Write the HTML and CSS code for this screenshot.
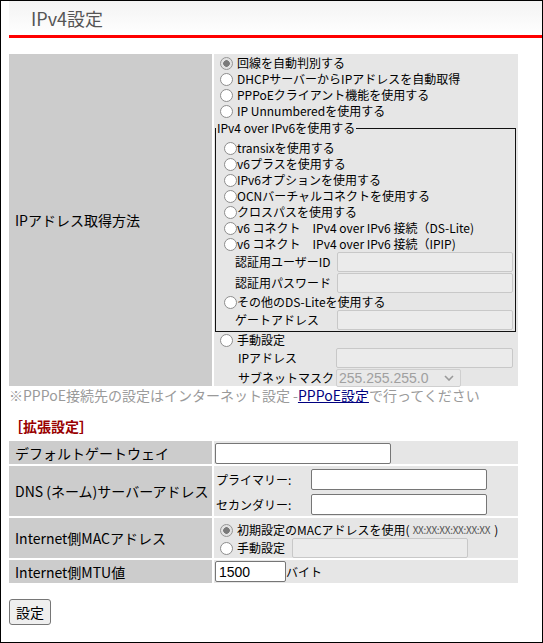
FILE: index.html
```html
<!DOCTYPE html>
<html lang="ja">
<head>
<meta charset="utf-8">
<title>IPv4設定</title>
<link rel="stylesheet" href="styles.css">
</head>
<body>
<div class="frame">
  <div class="header"><h1 class="title">IPv4設定</h1></div>

  <div class="grid main">
    <div class="lab">IPアドレス取得方法</div>
    <div class="val first">
      <label class="opt"><input type="radio" class="radio on" name="m" checked disabled>回線を自動判別する</label>
      <label class="opt"><input type="radio" class="radio" name="m">DHCPサーバーからIPアドレスを自動取得</label>
      <label class="opt"><input type="radio" class="radio" name="m">PPPoEクライアント機能を使用する</label>
      <label class="opt"><input type="radio" class="radio" name="m">IP Unnumberedを使用する</label>
      <fieldset class="v6">
        <legend>IPv4 over IPv6を使用する</legend>
        <div class="v6-body">
          <label class="opt"><input type="radio" class="radio" name="m">transixを使用する</label>
          <label class="opt"><input type="radio" class="radio" name="m">v6プラスを使用する</label>
          <label class="opt"><input type="radio" class="radio" name="m">IPv6オプションを使用する</label>
          <label class="opt"><input type="radio" class="radio" name="m">OCNバーチャルコネクトを使用する</label>
          <label class="opt"><input type="radio" class="radio" name="m">クロスパスを使用する</label>
          <label class="opt"><input type="radio" class="radio" name="m">v6 コネクト　IPv4 over IPv6 接続（DS-Lite)</label>
          <label class="opt"><input type="radio" class="radio" name="m">v6 コネクト　IPv4 over IPv6 接続（IPIP)</label>
          <div class="field"><span class="flabel">認証用ユーザーID</span><input type="text" class="txt" disabled></div>
          <div class="field gap"><span class="flabel">認証用パスワード</span><input type="text" class="txt" disabled></div>
          <label class="opt gap"><input type="radio" class="radio" name="m">その他のDS-Liteを使用する</label>
          <div class="field"><span class="flabel">ゲートアドレス</span><input type="text" class="txt" disabled></div>
        </div>
      </fieldset>
      <label class="opt"><input type="radio" class="radio" name="m">手動設定</label>
      <div class="field sub"><span class="slabel">IPアドレス</span><input type="text" class="txt wide" disabled></div>
      <div class="field sub gap sel-row"><span class="slabel">サブネットマスク</span>
        <span class="selwrap">
          <select class="sel" disabled><option>255.255.255.0</option></select>
          <svg class="chev" width="10" height="6" viewBox="0 0 10 6"><path d="M1 1 L5 5 L9 1" fill="none" stroke="#9a9a9a" stroke-width="1.6"/></svg>
        </span>
      </div>
    </div>
  </div>

  <p class="note">※PPPoE接続先の設定はインターネット設定 -<a class="link" href="#">PPPoE設定</a>で行ってください</p>

  <h2 class="sect">［拡張設定］</h2>

  <div class="grid ext">
    <div class="lab">デフォルトゲートウェイ</div>
    <div class="val r1"><input type="text" class="txt big"></div>

    <div class="lab">DNS (ネーム)サーバーアドレス</div>
    <div class="val r2">
      <div class="dns-row"><span class="dlabel">プライマリー:</span><input type="text" class="txt big"></div>
      <div class="dns-row"><span class="dlabel">セカンダリー:</span><input type="text" class="txt big"></div>
    </div>

    <div class="lab">Internet側MACアドレス</div>
    <div class="val r3">
      <label class="opt"><input type="radio" class="radio on" name="mac" checked disabled>初期設定のMACアドレスを使用(<span class="mac">XX:XX:XX:XX:XX:XX</span>)</label>
      <div class="mac-row"><input type="radio" class="radio" name="mac"><span class="mlabel">手動設定</span><input type="text" class="txt" disabled></div>
    </div>

    <div class="lab">Internet側MTU値</div>
    <div class="val r4"><input type="text" class="txt mtu" value="1500"><span class="unit">バイト</span></div>
  </div>

  <button class="btn" type="button">設定</button>
</div>
</body>
</html>
```

FILE: styles.css
```css
html, body {
  margin: 0;
  padding: 0;
  background: #fff;
}

body {
  font-family: "Noto Sans CJK JP", "Noto Sans", sans-serif;
  color: #000;
}

.frame {
  width: 543px;
  height: 643px;
  box-sizing: border-box;
  border: 1px solid #000;
  padding-left: 8px;
  overflow: hidden;
}

.header {
  height: 34px;
  border-bottom: 3px solid #ff0000;
  background: linear-gradient(#f3f3f3, #ffffff);
  padding-left: 22px;
  display: flex;
  align-items: center;
}

.title {
  margin: 0;
  font-size: 18px;
  line-height: 22px;
  font-weight: normal;
  color: #555;
}

.grid {
  display: grid;
  grid-template-columns: 203px 304px;
  gap: 2px;
  width: 509px;
}

.main {
  margin-top: 16px;
}

.lab {
  background: #cccccc;
  padding-left: 6px;
  font-size: 14px;
  line-height: 16px;
  display: flex;
  align-items: center;
  white-space: nowrap;
  overflow: hidden;
}

.val {
  background: #e6e6e6;
  font-size: 12px;
  line-height: 16px;
}

.first {
  padding-top: 1px;
}

.opt {
  display: flex;
  align-items: center;
  height: 16px;
  white-space: nowrap;
}

.radio {
  -webkit-appearance: none;
  appearance: none;
  box-sizing: border-box;
  width: 13px;
  height: 13px;
  margin: 0 4px 0 6px;
  border: 1px solid #8d8d8d;
  border-radius: 50%;
  background: #fff;
  flex: none;
}

.radio.on {
  border-color: #959595;
  background: radial-gradient(circle at center, #7a7a7a 0 3px, #e2e2e2 3.6px 100%);
}

.v6 {
  margin: 1px 2px 0 1px;
  padding: 0;
  border: 1px solid #111;
  min-width: 0;
}

.v6 legend {
  padding: 0 1px;
  font-size: 12px;
  line-height: 16px;
}

.v6-body {
  padding: 4px 0 1px 8px;
}

.v6 .radio {
  margin: 0;
}

.field {
  display: flex;
  align-items: center;
  height: 20px;
  white-space: nowrap;
}

.gap {
  margin-top: 1px;
}

.flabel {
  width: 102px;
  margin-left: 11px;
  flex: none;
}

.sub {
  padding-left: 24px;
}

.slabel {
  width: 98px;
  flex: none;
}

.sel-row {
  height: 17px;
}

.txt {
  box-sizing: border-box;
  width: 176px;
  height: 20px;
  margin: 0;
  padding: 1px 3px;
  border: 1px solid #767676;
  border-radius: 2px;
  background: #fff;
  font: 14px "Liberation Sans", Arial, sans-serif;
  color: #000;
}

.txt:disabled {
  background: #ebebeb;
  border-color: #c8c8c8;
}

.wide {
  width: 177px;
}

.selwrap {
  position: relative;
  display: inline-block;
}

.sel {
  -webkit-appearance: none;
  appearance: none;
  box-sizing: border-box;
  width: 125px;
  height: 18px;
  margin: 0;
  padding: 0 2px;
  border: 1px solid #cfcfcf;
  border-radius: 2px;
  background: #e9e9e9;
  color: #a0a0a0;
  font: 14px "Liberation Sans", Arial, sans-serif;
  line-height: 16px;
  opacity: 1;
}

.chev {
  position: absolute;
  right: 7px;
  top: 6px;
}

.note {
  margin: 1px 0 0;
  font-size: 14px;
  line-height: 16px;
  color: #9a9a9a;
  white-space: nowrap;
}

.link {
  color: #00007f;
  text-decoration: underline;
}

.sect {
  margin: 15px 0 0;
  font-size: 14px;
  line-height: 16px;
  font-weight: bold;
  color: #990000;
}

.ext {
  margin-top: 7px;
}

.r1 {
  padding: 2px 0 0 1px;
}

.big {
  height: 21px;
}

.r2 {
  padding: 3px 0 1px 2px;
  display: flex;
  flex-direction: column;
  gap: 4px;
}

.dns-row {
  display: flex;
  align-items: center;
  white-space: nowrap;
}

.dlabel {
  width: 95px;
  flex: none;
}

.r3 {
  padding-top: 4px;
}

.mac {
  font-size: 10px;
  color: #555;
  margin: 0 4px 0 3px;
  letter-spacing: -0.3px;
}

.mac-row {
  display: flex;
  align-items: center;
  height: 20px;
}

.mlabel {
  margin-right: 7px;
}

.r4 {
  padding: 1px 0 1px 1px;
  display: flex;
  align-items: center;
}

.mtu {
  width: 71px;
  height: 21px;
}

.btn {
  display: block;
  margin-top: 16px;
  height: 26px;
  padding: 0 6px;
  border: 1px solid #767676;
  border-radius: 3px;
  background: #efefef;
  font: 14px "Noto Sans CJK JP", sans-serif;
  color: #000;
}
```
